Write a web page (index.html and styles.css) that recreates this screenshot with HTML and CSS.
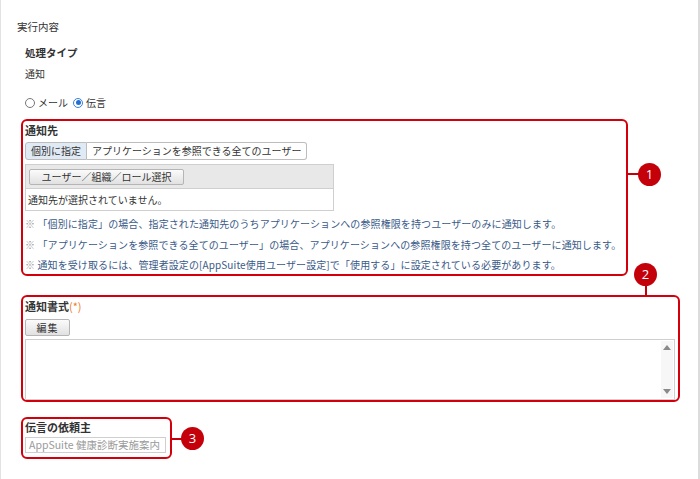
FILE: index.html
```html
<!DOCTYPE html>
<html lang="ja">
<head>
<meta charset="utf-8">
<link rel="stylesheet" href="styles.css">
</head>
<body>
<div class="page">
  <div class="section-title">実行内容</div>
  <div class="field">
    <div class="label">処理タイプ</div>
    <div class="value">通知</div>
    <div class="radios">
      <span class="radio"></span><span class="radio-text">メール</span>
      <span class="radio checked"></span><span class="radio-text">伝言</span>
    </div>
  </div>

  <div class="callout box1">
    <div class="label">通知先</div>
    <div class="tabs">
      <span class="tab active">個別に指定</span><span class="tab">アプリケーションを参照できる全てのユーザー</span>
    </div>
    <div class="select-table">
      <div class="select-head"><span class="btn btn-wide">ユーザー／組織／ロール選択</span></div>
      <div class="select-row">通知先が選択されていません。</div>
    </div>
    <div class="notes">
      <div class="note"><span class="mark">※</span> 「個別に指定」の場合、指定された通知先のうちアプリケーションへの参照権限を持つユーザーのみに通知します。</div>
      <div class="note"><span class="mark">※</span> 「アプリケーションを参照できる全てのユーザー」の場合、アプリケーションへの参照権限を持つ全てのユーザーに通知します。</div>
      <div class="note last"><span class="mark">※</span> 通知を受け取るには、管理者設定の[AppSuite使用ユーザー設定]で「使用する」に設定されている必要があります。</div>
    </div>
    <span class="link link-h link1"></span>
    <span class="badge badge1">1</span>
  </div>

  <div class="callout box2">
    <div class="label">通知書式<span class="req">(*)</span></div>
    <span class="btn btn-edit">編集</span>
    <div class="textarea">
      <div class="scrollbar">
        <span class="arrow up"></span>
        <span class="arrow down"></span>
      </div>
    </div>
    <span class="link link-v link2"></span>
    <span class="badge badge2">2</span>
  </div>

  <div class="callout box3">
    <div class="label">伝言の依頼主</div>
    <div class="input">AppSuite 健康診断実施案内</div>
    <span class="link link-h link3"></span>
    <span class="badge badge3">3</span>
  </div>
</div>
</body>
</html>
```

FILE: styles.css
```css
* { box-sizing: border-box; }
html, body { margin: 0; padding: 0; background: #fff; }
body {
  font-family: "Noto Sans CJK JP", "Noto Sans", sans-serif;
  font-size: 10px;
  color: #333;
}
.page {
  width: 700px;
  height: 479px;
  border-left: 1px solid #e2e2e2;
  border-right: 2px solid #dcdcdc;
  padding: 20px 0 0 16px;
  overflow: hidden;
}
.section-title {
  font-size: 10.5px;
  line-height: 14px;
  color: #333;
}
.field { padding-left: 8px; }
.label {
  font-weight: bold;
  font-size: 11px;
  line-height: 14px;
  color: #333;
}
.field .label { margin-top: 12px; font-size: 10.5px; }
.value { margin-top: 7px; line-height: 14px; }
.radios {
  margin-top: 14px;
  display: flex;
  align-items: center;
  height: 14px;
}
.radio {
  width: 10px;
  height: 10px;
  border: 1px solid #777;
  border-radius: 50%;
  background: #fff;
  margin-top: 1px;
  margin-right: 3px;
  position: relative;
}
.radio.checked { border-color: #3c7fd6; }
.radio.checked::after {
  content: "";
  position: absolute;
  left: 1.5px; top: 1.5px;
  width: 5px; height: 5px;
  border-radius: 50%;
  background: #1f6fd6;
}
.radio-text { margin-right: 5px; }

.callout {
  position: relative;
  border: 2px solid #d3000c;
  border-radius: 6px;
  margin-left: 4px;
  padding: 2px 2px 0 2px;
}
.box1 { width: 607px; margin-top: 10px; }
.box2 { width: 659px; margin-top: 19px; padding-right: 3px; }
.box3 { width: 151px; margin-top: 15px; padding: 1px 4px 4px 2px; }

.tabs { margin-top: 5px; display: flex; height: 18px; }
.tab {
  border: 1px solid #bdbdbd;
  line-height: 16px;
  padding: 0 5px 0 5px;
  background: #fff;
  font-size: 10px;
  color: #333;
}
.tab + .tab { border-left: none; border-radius: 0 3px 3px 0; }
.tab.active { background: #e0eaf4; border-radius: 3px 0 0 3px; }

.select-table {
  margin-top: 4px;
  width: 309px;
  border: 1px solid #cfcfcf;
}
.select-head {
  background: #e8e8e8;
  height: 24px;
  padding: 4px 0 0 3px;
  border-bottom: 1px solid #cfcfcf;
}
.select-row { height: 21px; line-height: 21px; padding-left: 2px; background: #fff; }

.btn {
  display: inline-block;
  height: 16px;
  line-height: 14px;
  border: 1px solid #b5b5b5;
  border-radius: 2px;
  background: linear-gradient(#fbfbfb, #e1e1e1);
  text-align: center;
  color: #333;
}
.btn-wide { width: 155px; }
.btn-edit { width: 45px; height: 17px; line-height: 15px; margin-top: 6px; letter-spacing: 1px; }

.notes { margin-top: 2px; }
.note { line-height: 21px; color: #3a5a88; white-space: nowrap; letter-spacing: 0.1px; }
.note.last { line-height: 19px; }
.mark { color: #9a9a9a; }

.req { color: #f07a2a; font-weight: normal; }

.textarea {
  position: relative;
  margin-top: 3px;
  height: 61px;
  border: 1px solid #cfcfcf;
  background: #fff;
}
.scrollbar {
  position: absolute;
  right: 1px; top: 1px; bottom: 1px;
  width: 12px;
  background: #f7f7f7;
}
.arrow {
  position: absolute;
  left: 2px;
  width: 0; height: 0;
  border-left: 4px solid transparent;
  border-right: 4px solid transparent;
}
.arrow.up { top: 4px; border-bottom: 5px solid #8a8a8a; }
.arrow.down { bottom: 4px; border-top: 5px solid #8a8a8a; }

.input {
  margin-top: 3px;
  height: 16px;
  border: 1px solid #cfcfcf;
  padding-left: 3px;
  line-height: 14px;
  color: #9a9a9a;
  font-size: 10.5px;
  white-space: nowrap;
}

.badge {
  position: absolute;
  width: 23px;
  height: 23px;
  border-radius: 50%;
  background: #c4000b;
  color: #fff;
  font-family: "Open Sans", "Liberation Sans", sans-serif;
  font-size: 13px;
  line-height: 23px;
  text-align: center;
}
.link { position: absolute; background: #c4000b; }
.link-h { height: 2px; }
.link-v { width: 2px; }

.link1 { left: 605px; top: 52px; width: 12px; }
.badge1 { left: 615px; top: 42px; }

.link2 { left: 622px; top: -12px; height: 11px; }
.badge2 { left: 611px; top: -34px; }

.link3 { left: 149px; top: 19px; width: 11px; }
.badge3 { left: 158px; top: 8px; }
```
